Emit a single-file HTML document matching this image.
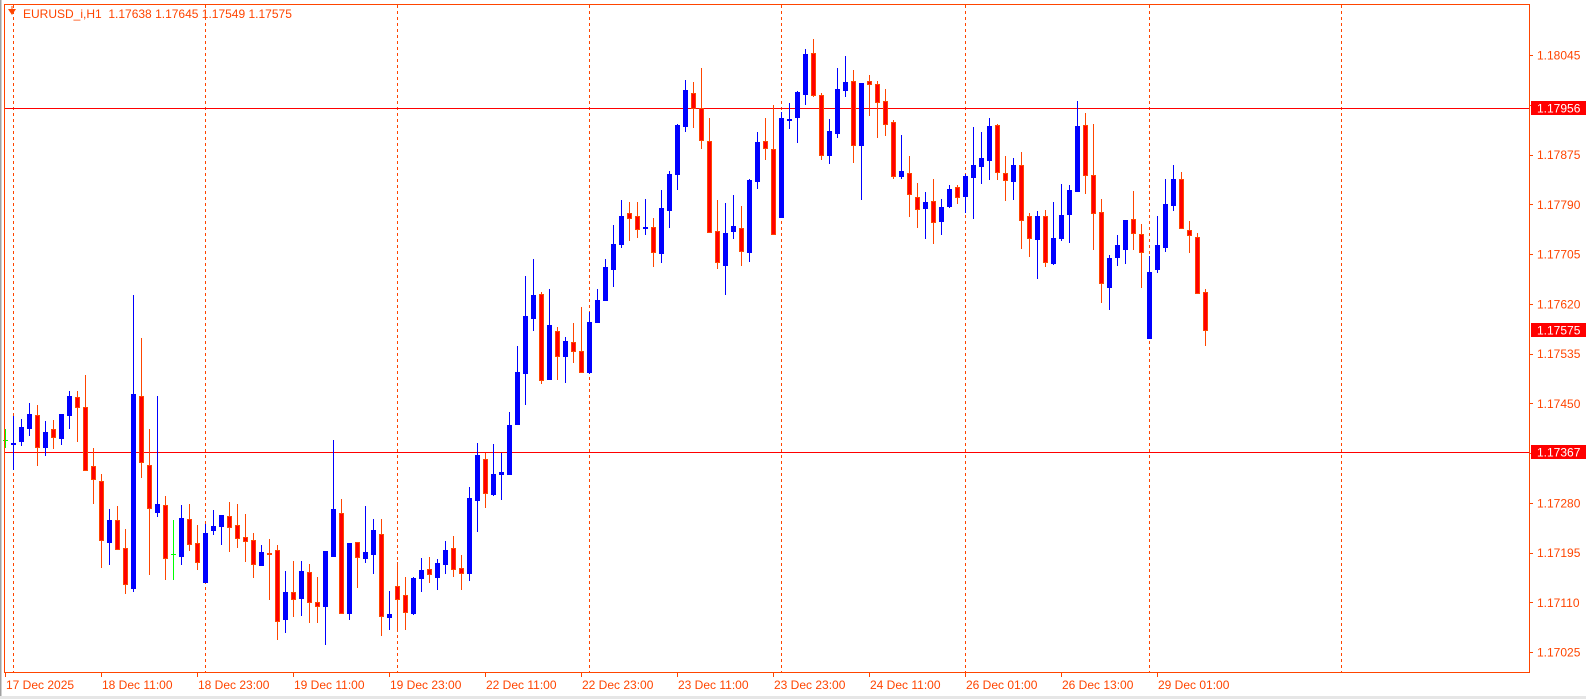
<!DOCTYPE html>
<html><head><meta charset="utf-8">
<style>
html,body{margin:0;padding:0;background:#fff;width:1586px;height:699px;overflow:hidden}
svg{display:block}
text{font-family:"Liberation Sans",sans-serif;font-size:12px}
</style></head><body>
<svg id="c" width="1586" height="699" xmlns="http://www.w3.org/2000/svg">
<rect x="0" y="0" width="1586" height="699" fill="#fff"/>
<rect x="0" y="0" width="1.5" height="699" fill="#a0a0a0"/>
<rect x="0" y="696" width="1586" height="3" fill="#e6e6e6"/>
<g id="grid"></g>
<line x1="4" y1="108.5" x2="1530" y2="108.5" stroke="#ff0000" stroke-width="1"/>
<line x1="4" y1="452.5" x2="1530" y2="452.5" stroke="#ff0000" stroke-width="1"/>
<g id="candles"></g>
<rect x="4.5" y="4.5" width="1525" height="668" fill="none" stroke="#ff4500" stroke-width="1"/>
<g id="axis" fill="#ff4500"></g>
<polygon points="8,9 16,9 12,15" fill="#ff4500"/>
<line x1="12" y1="6" x2="12" y2="9" stroke="#ff4500"/>
<text x="23" y="18" fill="#ff4500">EURUSD_i,H1&#160;&#160;1.17638 1.17645 1.17549 1.17575</text>
</svg>
<script>
var NS="http://www.w3.org/2000/svg";
function el(p,n,a,t){var e=document.createElementNS(NS,n);for(var k in a)e.setAttribute(k,a[k]);if(t)e.textContent=t;p.appendChild(e);return e;}
var grid=document.getElementById('grid'),cg=document.getElementById('candles'),ax=document.getElementById('axis');
[13,205,397,589,781,965,1149,1341].forEach(function(x){el(grid,'line',{x1:x+0.5,y1:5,x2:x+0.5,y2:672,stroke:'#ff4500','stroke-width':1,'stroke-dasharray':'3,3'});});
var D=[
['g',440,440,429,448],['u',443,444,416,470],['u',427,441,419,446],['u',414,428,403,436],['d',415,447,405,466],
['u',432,447,421,456],['d',429,437,420,449],['u',414,438,414,445],['u',396,415,391,429],['d',397,407,391,442],
['d',407,470,375,471],['d',466,479,448,504],['d',481,540,474,568],['u',520,542,509,565],['d',520,549,506,549],
['d',548,584,529,594],['u',394,588,295,592],['d',396,462,338,478],['d',465,508,429,575],['u',504,512,396,517],
['d',505,558,496,580],['g',554,554,520,580],['u',518,556,505,565],['d',519,544,504,551],['d',543,562,525,570],
['u',533,582,524,582],['u',526,530,510,535],['u',515,526,515,545],['d',516,527,502,552],['d',525,538,504,548],
['d',537,541,514,562],['d',540,564,533,578],['u',552,565,545,565],['d',553,554,539,600],['d',550,621,545,640],
['u',592,619,571,633],['d',592,599,561,617],['u',571,598,561,616],['d',572,602,564,623],['d',602,606,577,623],
['u',551,606,551,645],['u',509,556,440,556],['d',513,613,499,613],['u',543,613,543,620],['d',542,557,542,588],
['u',552,558,506,563],['u',530,554,519,574],['d',534,616,519,636],['u',614,617,591,630],['d',586,599,562,630],
['d',595,612,577,630],['u',578,613,577,615],['u',570,578,558,592],['d',569,574,557,583],['u',563,577,559,590],
['u',550,564,541,574],['d',548,569,536,577],['d',568,573,555,590],['u',498,573,487,581],['u',455,500,443,532],
['d',459,493,453,508],['u',474,494,444,496],['u',472,474,453,500],['u',425,474,412,474],['u',372,424,346,424],
['u',316,373,276,405],['u',295,318,259,331],['d',294,380,292,384],['u',325,379,289,379],['d',331,356,327,380],
['u',341,356,337,383],['d',342,351,323,363],['d',351,372,307,372],['u',322,372,312,374],['u',300,322,289,322],
['u',267,300,259,300],['u',244,269,225,287],['u',216,244,200,248],['d',213,218,202,241],['d',216,229,202,238],
['u',227,228,199,235],['d',227,252,218,267],['u',208,253,190,263],['u',174,210,171,228],['u',125,174,124,190],
['u',90,126,80,132],['d',93,108,82,128],['d',108,140,68,149],['d',141,232,118,233],['d',231,262,200,269],
['u',233,265,203,295],['u',226,231,195,239],['d',228,251,206,266],['u',180,252,179,262],['u',142,181,132,189],
['d',141,148,118,160],['d',149,234,105,234],['u',118,217,112,217],['u',119,120,103,129],['u',92,117,91,143],
['u',54,94,49,105],['d',53,95,39,97],['d',95,155,93,160],['u',131,155,119,164],['u',89,133,68,138],
['u',82,90,56,97],['d',81,145,70,163],['u',83,145,83,200],['d',81,84,75,116],['d',84,102,81,138],
['d',101,124,89,136],['d',122,176,120,179],['u',171,176,135,179],['d',173,194,156,217],['d',197,209,183,228],
['u',202,208,192,239],['d',201,222,179,244],['u',207,221,199,235],['u',189,206,185,208],['d',187,197,185,204],
['u',176,196,174,213],['u',165,177,127,219],['u',158,166,132,184],['u',126,160,118,180],['d',125,172,124,180],
['d',173,180,156,201],['u',165,181,158,200],['d',165,220,152,249],['d',216,238,213,257],['u',216,239,211,279],
['d',216,262,210,267],['u',238,263,202,265],['u',215,238,184,241],['u',190,214,185,243],['u',126,191,101,191],
['d',125,175,113,194],['d',175,213,124,250],['d',212,283,199,303],['u',258,287,255,310],['u',245,257,235,266],
['u',220,249,220,264],['d',219,233,191,250],['d',234,252,224,288],['u',272,338,256,338],['u',245,269,216,273],
['u',204,247,179,252],['u',179,205,165,211],['d',179,228,172,228],['d',230,235,221,253],['d',237,293,233,293],
['d',292,330,289,346]
];
D.forEach(function(c,i){
  var x=5+8*i,t=c[0],top=c[1],bot=c[2],h=c[3],l=c[4];
  var col=t=='u'?'#0000ff':(t=='g'?'#00ff00':'#ff4500');
  el(cg,'rect',{x:x,y:h,width:1,height:Math.max(1,l-h),fill:col});
  if(t=='g'){el(cg,'rect',{x:x-2,y:top,width:5,height:1,fill:col});return;}
  var bh=Math.max(1,bot-top);
  if(t=='u'){el(cg,'rect',{x:x-2,y:top,width:5,height:bh+1,fill:'#0000ff'});}
  else{el(cg,'rect',{x:x-2,y:top,width:5,height:bh+1,fill:'#ff4500'});if(bh>2)el(cg,'rect',{x:x-1,y:top+1,width:3,height:bh-1,fill:'#ff0000'});}
});
var P=['1.18045','1.17960','1.17875','1.17790','1.17705','1.17620','1.17535','1.17450','1.17365','1.17280','1.17195','1.17110','1.17025'];
P.forEach(function(p,k){var y=55+49.75*k;el(ax,'rect',{x:1530,y:Math.round(y),width:3,height:1});el(ax,'text',{x:1537,y:y+4.5},p);});
var L=['17 Dec 2025','18 Dec 11:00','18 Dec 23:00','19 Dec 11:00','19 Dec 23:00','22 Dec 11:00','22 Dec 23:00','23 Dec 11:00','23 Dec 23:00','24 Dec 11:00','26 Dec 01:00','26 Dec 13:00','29 Dec 01:00'];
L.forEach(function(s,k){var x=5+96*k;el(ax,'rect',{x:x,y:673,width:1,height:4});el(ax,'text',{x:x+1,y:689},s);});
[['1.17956',108],['1.17367',452],['1.17575',330]].forEach(function(b){
  el(ax,'rect',{x:1531,y:b[1]-7,width:56,height:14,fill:'#ff0000'});
  el(ax,'text',{x:1537,y:b[1]+4.5,fill:'#ffffff'},b[0]);
});
</script>
</body></html>
